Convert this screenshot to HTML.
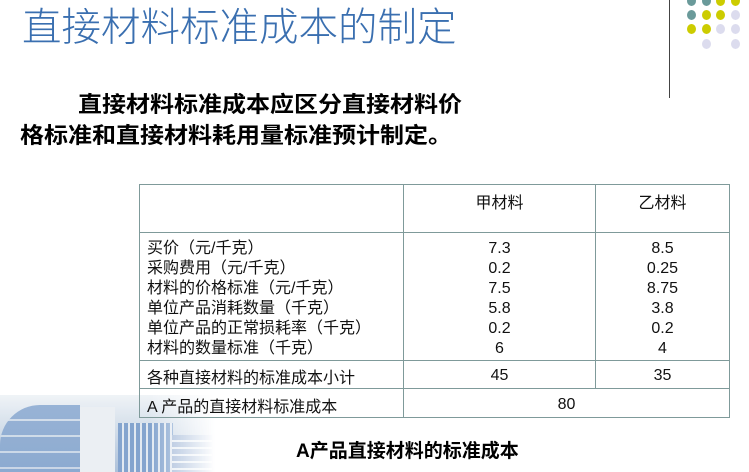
<!DOCTYPE html>
<html><head><meta charset="utf-8"><style>
body{margin:0;width:749px;height:472px;overflow:hidden;background:#fff;position:relative;font-family:"Liberation Sans","Noto Sans CJK SC",sans-serif;}
.abs{position:absolute}
.title{left:22px;top:-4px;font-size:39.5px;color:#3a6fb0;white-space:nowrap;font-weight:300}
.p{font-size:24px;font-weight:bold;color:#000;white-space:nowrap;transform:scaleY(0.92);transform-origin:0 0}
.dot{position:absolute;width:9px;height:10px;border-radius:50%}
.t{background:#6a9a9a}.y{background:#cccc00}.l{background:#dcdcee}
table{position:absolute;left:139px;top:184px;width:591px;border-collapse:collapse;font-size:16px;color:#111}
td{border:1.5px solid #7f9a9a;padding:0 7px;vertical-align:top}
.c{text-align:center}
.m{vertical-align:middle;padding-top:3px}
</style></head><body>
<div class="abs" style="left:0;top:395px;width:215px;height:77px;background:linear-gradient(180deg,#eef2f6,#cfdbe8 40%,#9fb7d4);-webkit-mask-image:linear-gradient(90deg,#000 70%,transparent);mask-image:linear-gradient(90deg,#000 70%,transparent);opacity:.85">
 <div class="abs" style="left:0;top:10px;width:80px;height:67px;background:repeating-linear-gradient(180deg,#6f95c6 0 14px,#c8d6e6 14px 16px);border-radius:40px 0 0 0;opacity:.8"></div>
 <div class="abs" style="left:80px;top:12px;width:35px;height:65px;background:#e8edf2"></div>
 <div class="abs" style="left:118px;top:28px;width:55px;height:49px;background:repeating-linear-gradient(90deg,#6f95c6 0 4px,#dde6ef 4px 6px)"></div>
 <div class="abs" style="left:172px;top:40px;width:40px;height:37px;background:repeating-linear-gradient(180deg,#8fa9cf 0 5px,#e3ebf3 5px 7px)"></div>
</div>
<div class="abs title">直接材料标准成本的制定</div>
<div class="abs" style="left:669px;top:0;width:1px;height:98px;background:#444"></div>
<div class="dot t" style="left:687px;top:-4px"></div><div class="dot t" style="left:702px;top:-4px"></div><div class="dot y" style="left:716px;top:-4px"></div><div class="dot y" style="left:731px;top:-4px"></div>
<div class="dot t" style="left:687px;top:10px"></div><div class="dot y" style="left:702px;top:10px"></div><div class="dot y" style="left:716px;top:10px"></div><div class="dot l" style="left:731px;top:10px"></div>
<div class="dot y" style="left:687px;top:24px"></div><div class="dot y" style="left:702px;top:24px"></div><div class="dot l" style="left:716px;top:24px"></div><div class="dot l" style="left:731px;top:24px"></div>
<div class="dot l" style="left:702px;top:39px"></div><div class="dot l" style="left:731px;top:39px"></div>
<div class="abs p" style="left:78px;top:86px">直接材料标准成本应区分直接材料价</div>
<div class="abs p" style="left:20px;top:117px">格标准和直接材料耗用量标准预计制定。</div>
<table>
<tr style="height:48px"><td style="width:249px"></td><td class="c" style="width:177px;padding-top:4px">甲材料</td><td class="c" style="padding-top:4px">乙材料</td></tr>
<tr style="height:128px"><td style="padding-top:6px;line-height:20px">买价（元/千克）<br>采购费用（元/千克）<br>材料的价格标准（元/千克）<br>单位产品消耗数量（千克）<br>单位产品的正常损耗率（千克）<br>材料的数量标准（千克）</td>
<td class="c" style="padding-top:6px;line-height:20px">7.3<br>0.2<br>7.5<br>5.8<br>0.2<br>6</td>
<td class="c" style="padding-top:6px;line-height:20px">8.5<br>0.25<br>8.75<br>3.8<br>0.2<br>4</td></tr>
<tr style="height:27px"><td class="m">各种直接材料的标准成本小计</td><td class="c m">45</td><td class="c m">35</td></tr>
<tr style="height:29px"><td class="m">A 产品的直接材料标准成本</td><td class="c m" colspan="2">80</td></tr>
</table>
<div class="abs" style="left:296px;top:436px;font-size:19px;font-weight:bold;white-space:nowrap">A产品直接材料的标准成本</div>
</body></html>
